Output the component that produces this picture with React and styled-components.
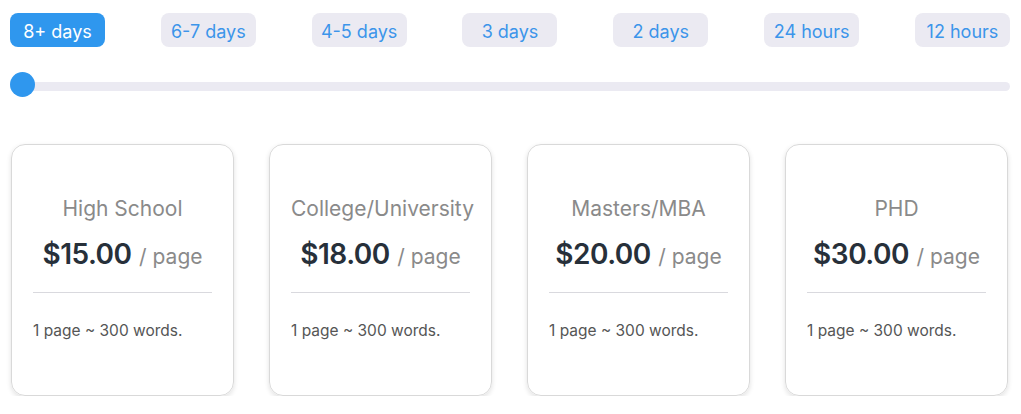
import React, { useState } from 'react'
import styled, { createGlobalStyle } from 'styled-components'

const GlobalStyle = createGlobalStyle`
  body {
    margin: 0;
    background: #fff;
    font-family: Inter, 'Liberation Sans', sans-serif;
  }
`

const Page = styled.div`
  width: 1000px;
  padding: 13px 10px 0 10px;
`

const Tabs = styled.div`
  display: flex;
  justify-content: space-between;
`

const Tab = styled.button`
  width: 95px;
  height: 34px;
  border: none;
  border-radius: 8px;
  padding: 2px 0 0 0;
  font-family: Inter, 'Liberation Sans', sans-serif;
  font-size: 18px;
  cursor: pointer;
  background: ${({ active }) => (active ? '#2f97ee' : '#ebeaf2')};
  color: ${({ active }) => (active ? '#ffffff' : '#3c95ea')};
`

const Slider = styled.div`
  position: relative;
  margin-top: 25px;
  height: 25px;
  display: flex;
  align-items: center;
`

const Track = styled.div`
  flex: 1;
  height: 9px;
  margin-top: 3px;
  border-radius: 5px;
  background: #ebeaf2;
`

const Thumb = styled.div`
  position: absolute;
  left: 0;
  top: 0;
  width: 25px;
  height: 25px;
  border-radius: 50%;
  background: #2f97ee;
`

const Cards = styled.div`
  display: grid;
  grid-template-columns: repeat(4, 223px);
  column-gap: 35px;
  margin-top: 47px;
  padding-left: 1px;
`

const Card = styled.div`
  box-sizing: border-box;
  height: 252px;
  border: 1px solid #d9d9d9;
  border-radius: 14px;
  box-shadow: 0 2px 5px rgba(0, 0, 0, 0.12);
  padding: 51px 21px 0 21px;
  display: flex;
  flex-direction: column;
`

const Title = styled.div`
  text-align: center;
  font-size: 21px;
  line-height: 26px;
  color: #8a8a8a;
  white-space: nowrap;
`

const Price = styled.div`
  text-align: center;
  margin-top: 14px;
  line-height: 36px;
  white-space: nowrap;
`

const Amount = styled.span`
  font-size: 28px;
  font-weight: 600;
  color: #27303a;
  letter-spacing: -0.5px;
`

const Unit = styled.span`
  font-size: 21px;
  color: #8a8a8a;
  margin-left: 3px;
`

const Divider = styled.hr`
  border: none;
  border-top: 1px solid #d9d9de;
  margin: 16px 0 0 0;
`

const Note = styled.div`
  margin-top: 28px;
  font-size: 15.5px;
  line-height: 20px;
  color: #555;
`

const tabs = ['8+ days', '6-7 days', '4-5 days', '3 days', '2 days', '24 hours', '12 hours']

const levels = [
  { name: 'High School', price: '$15.00' },
  { name: 'College/University', price: '$18.00' },
  { name: 'Masters/MBA', price: '$20.00' },
  { name: 'PHD', price: '$30.00' },
]

const App = () => {
  const [active, setActive] = useState(0)
  return (
    <>
      <GlobalStyle />
      <Page>
        <Tabs>
          {tabs.map((t, i) => (
            <Tab key={t} active={i === active ? 1 : 0} onClick={() => setActive(i)}>
              {t}
            </Tab>
          ))}
        </Tabs>
        <Slider>
          <Track />
          <Thumb style={{ left: `${(active / (tabs.length - 1)) * 975}px` }} />
        </Slider>
        <Cards>
          {levels.map((l) => (
            <Card key={l.name}>
              <Title>{l.name}</Title>
              <Price>
                <Amount>{l.price}</Amount> <Unit>/ page</Unit>
              </Price>
              <Divider />
              <Note>1 page ~ 300 words.</Note>
            </Card>
          ))}
        </Cards>
      </Page>
    </>
  )
}

export default App
